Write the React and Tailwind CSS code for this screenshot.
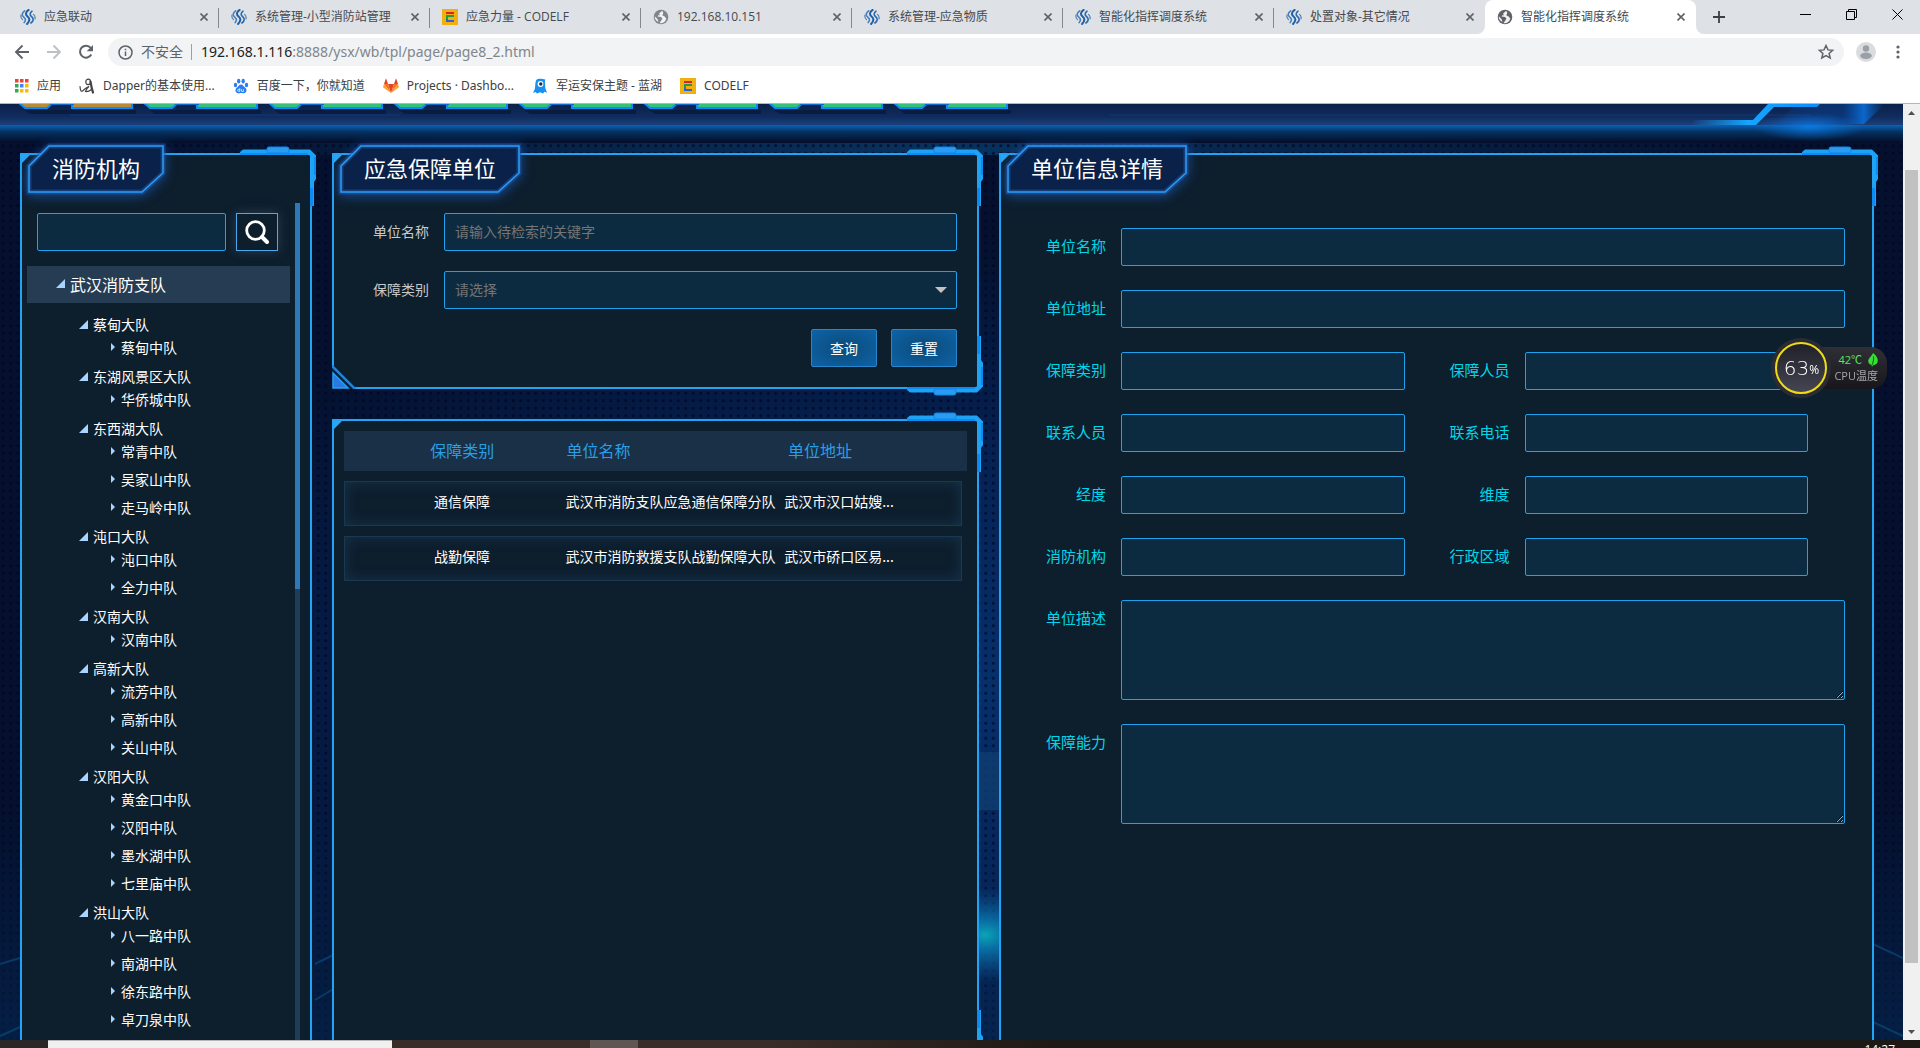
import React from "react";

const TREE = [
  ["蔡甸大队", ["蔡甸中队"]],
  ["东湖风景区大队", ["华侨城中队"]],
  ["东西湖大队", ["常青中队", "吴家山中队", "走马岭中队"]],
  ["沌口大队", ["沌口中队", "全力中队"]],
  ["汉南大队", ["汉南中队"]],
  ["高新大队", ["流芳中队", "高新中队", "关山中队"]],
  ["汉阳大队", ["黄金口中队", "汉阳中队", "墨水湖中队", "七里庙中队"]],
  ["洪山大队", ["八一路中队", "南湖中队", "徐东路中队", "卓刀泉中队"]],
];

const ROWS = [
  ["通信保障", "武汉市消防支队应急通信保障分队", "武汉市汉口姑嫂..."],
  ["战勤保障", "武汉市消防救援支队战勤保障大队", "武汉市硚口区易..."],
];

/* ---------- icons ---------- */

function SwirlIcon() {
  return (
    <svg className="size-4 shrink-0" viewBox="0 0 16 16" fill="none" strokeLinecap="round">
      <path d="M4.6 1.8C1.6 4 1.4 6.6 4 8.4c2 1.5 1.8 3.3.2 5.2" stroke="#4a7fb5" strokeWidth="1.6" />
      <path d="M8.6.9C5.2 3.3 5.2 5.8 7.8 7.7c2.3 1.8 2 4.3-.7 7.3" stroke="#1f5fa8" strokeWidth="2" />
      <path d="M12 2.2C9.6 4.2 9.6 6 11.6 7.7c2.4 2 2 4.2-.7 6.3" stroke="#2c68ad" strokeWidth="1.6" />
      <path d="M1 6c-.4 2 .2 3.5 1.5 4.6M15 10c.4-2-.2-3.5-1.5-4.6" stroke="#4a7fb5" strokeWidth="1.2" />
    </svg>
  );
}

function CodelfIcon() {
  return (
    <svg className="size-4 shrink-0" viewBox="0 0 16 16">
      <path fill="#f0b010" d="M0 0h16v16H0z" />
      <path fill="#d8232a" d="M4 3h8v2H4z" />
      <path fill="#1e9e3e" d="M4 6h8v2H6v2H4z" />
      <path fill="#2f62d9" d="M4 10h2v1h6v2H4z" />
    </svg>
  );
}

function GlobeIcon({ color }) {
  return (
    <svg className="size-4 shrink-0" viewBox="0 0 16 16">
      <circle cx="8" cy="8" r="7.3" fill={color} />
      <path
        fill="#fff"
        opacity=".9"
        d="M8.5 2.2 6 4.8l1 1.4H5.3L4.6 7.5 8 7.9l1.4 1.7-.8 1.5L6.5 14.3a6.5 6.5 0 0 0 6.8-4.8l-1.7-2-2.3-1.2 1-2.2L9.600 2.300zM1.700 7.200l2.800 2.900 1 2.900A6.300 6.300 0 0 1 1.700 7.200z"
      />
    </svg>
  );
}

function CloseIcon() {
  return (
    <svg className="size-2" viewBox="0 0 8 8" stroke="#5f6368" strokeWidth="1.6">
      <path d="M.5.5l7 7M7.5.5l-7 7" />
    </svg>
  );
}

function AppsIcon() {
  const colors = ["#ea4335", "#ea4335", "#ea4335", "#34a853", "#4285f4", "#fbbc05", "#34a853", "#fbbc05", "#fbbc05"];
  return (
    <svg className="size-[14px] shrink-0" viewBox="0 0 14 14">
      {colors.map((c, i) => (
        <rect key={i} x={(i % 3) * 5} y={Math.floor(i / 3) * 5} width="3.5" height="3.5" fill={c} />
      ))}
    </svg>
  );
}

function DapperIcon() {
  return (
    <svg className="size-4 shrink-0" viewBox="0 0 16 16" fill="none" stroke="#444" strokeLinecap="round">
      <path d="M11.500 4c0 1.700-1.200 2.700-2.500 2.700S6.800 5.700 6.800 4 8 1.200 9.300 1.200 11.500 2.300 11.500 4z" strokeWidth="1.200" />
      <path d="M11.500 3.500c.5 3 1 7 2.500 11" strokeWidth="2.200" />
      <path d="M1 8.500c.3 3.500 1 5.500 2.500 4.500 2-1.200 3.500-4 6.500-4.500-2 1.500-3 3-3.500 5 2 .3 4-.5 6-2" strokeWidth="1.200" />
    </svg>
  );
}

function BaiduIcon() {
  return (
    <svg className="size-4 shrink-0" viewBox="0 0 16 16" fill="#2d7df0">
      <ellipse cx="2.5" cy="7" rx="1.7" ry="2.2" />
      <ellipse cx="5.7" cy="3.2" rx="1.7" ry="2.4" />
      <ellipse cx="10.2" cy="3.2" rx="1.7" ry="2.4" />
      <ellipse cx="13.5" cy="7" rx="1.7" ry="2.2" />
      <path d="M8 6.5c2 0 2.7 2 4.3 3.3 2.3 2 1 5.4-1.3 5.4-1.3 0-2-.3-3-.3s-1.7.3-3 .3c-2.3 0-3.6-3.4-1.3-5.4C5.3 8.5 6 6.5 8 6.5z" />
      <path d="M6.8 10.3v3H5.6a.9.9 0 0 1 0-1.9h1.2M8.5 11.3v1.5c0 .5.3.7.7.7h1.2v-2.2" fill="none" stroke="#fff" strokeWidth=".8" />
    </svg>
  );
}

function GitlabIcon() {
  return (
    <svg className="size-4 shrink-0" viewBox="0 0 16 16">
      <path fill="#e24329" d="M8 15 11 6H5z" />
      <path fill="#fc6d26" d="M8 15 5 6H1z" />
      <path fill="#fc6d26" d="M8 15l3-9h4z" />
      <path fill="#fca326" d="M1 6 .1 8.8a.6.6 0 0 0 .2.7L8 15z" />
      <path fill="#fca326" d="m15 6 .9 2.8a.6.6 0 0 1-.2.7L8 15z" />
      <path fill="#e24329" d="M1 6h4L3.3 1c-.1-.3-.5-.3-.6 0zM15 6h-4l1.7-5c.1-.3.5-.3.6 0z" />
    </svg>
  );
}

function LanhuIcon() {
  return (
    <svg className="size-4 shrink-0" viewBox="0 0 16 16">
      <path fill="#1890f0" d="M4 2.500C5 1 6.500.8 8 .8s4 .2 5.500 1c-.5.8-.7 1.700-.5 3 .3 2 0 4 .5 6l1.500 4-2.500-1-1.500 1.700-3-1.200-3 1.200L3.500 14 1 15l1.800-4C3.500 8 3 5 4 2.500z" />
      <circle cx="8.5" cy="6" r="2.900" fill="#fff" />
      <circle cx="8.8" cy="6" r="1.700" fill="#103060" />
    </svg>
  );
}

/* ---------- browser chrome ---------- */

const TABS = [
  ["应急联动", <SwirlIcon />],
  ["系统管理-小型消防站管理", <SwirlIcon />],
  ["应急力量 - CODELF", <CodelfIcon />],
  ["192.168.10.151", <GlobeIcon color="#80868b" />],
  ["系统管理-应急物质", <SwirlIcon />],
  ["智能化指挥调度系统", <SwirlIcon />],
  ["处置对象-其它情况", <SwirlIcon />],
  ["智能化指挥调度系统", <GlobeIcon color="#5f6368" />],
];

const BOOKMARKS = [
  ["应用", <AppsIcon />],
  ["Dapper的基本使用...", <DapperIcon />],
  ["百度一下，你就知道", <BaiduIcon />],
  ["Projects · Dashbo...", <GitlabIcon />],
  ["军运安保主题 - 蓝湖", <LanhuIcon />],
  ["CODELF", <CodelfIcon />],
];

function TabStrip() {
  return (
    <div className="flex h-[34px] items-stretch bg-[#dee1e6] pl-2">
      {TABS.map(([title, icon], i) => {
        const active = i === TABS.length - 1;
        return (
          <div
            key={i}
            className={
              "relative flex w-[211px] items-center gap-2 pl-3 pr-[9px] text-xs text-[#45494d] " +
              (active ? "rounded-t-lg bg-white" : "")
            }
          >
            {icon}
            <span className="min-w-0 flex-1 truncate">{title}</span>
            <button aria-label="关闭标签页" className="flex size-3 items-center justify-center">
              <CloseIcon />
            </button>
            {i < TABS.length - 2 && <span className="absolute right-0 top-2 h-5 w-px bg-[#85898e]" />}
            {active && (
              <>
                <svg className="absolute -left-2 bottom-0 size-2" viewBox="0 0 8 8">
                  <path fill="#fff" d="M8 0v8H0a8 8 0 0 0 8-8z" />
                </svg>
                <svg className="absolute -right-2 bottom-0 size-2" viewBox="0 0 8 8">
                  <path fill="#fff" d="M0 0v8h8a8 8 0 0 1-8-8z" />
                </svg>
              </>
            )}
          </div>
        );
      })}
      <button aria-label="新标签页" className="ml-[15px] flex w-4 items-center justify-center">
        <svg className="size-3" viewBox="0 0 12 12" stroke="#3c4043" strokeWidth="1.8">
          <path d="M6 0v12M0 6h12" />
        </svg>
      </button>
      <div className="ml-auto flex h-7">
        <button aria-label="最小化" className="flex w-[46px] items-center justify-center">
          <svg className="size-[11px]" viewBox="0 0 11 11" stroke="#000">
            <path d="M0 5.5h11" />
          </svg>
        </button>
        <button aria-label="还原" className="flex w-[46px] items-center justify-center">
          <svg className="size-[11px]" viewBox="0 0 11 11" stroke="#000" fill="none">
            <path d="M.5 2.5h8v8h-8zM2.5 2.5v-2h8v8h-2" />
          </svg>
        </button>
        <button aria-label="关闭" className="flex w-[46px] items-center justify-center">
          <svg className="size-[11px]" viewBox="0 0 11 11" stroke="#000">
            <path d="M.5.5l10 10M10.5.5l-10 10" />
          </svg>
        </button>
      </div>
    </div>
  );
}

function Toolbar() {
  return (
    <div className="flex h-9 items-center bg-white pl-3 pr-3">
      <div className="flex w-24 gap-3">
        <button aria-label="后退">
          <svg className="size-5" viewBox="0 0 20 20" fill="none" stroke="#5f6368" strokeWidth="1.9">
            <path d="M17 10H4M10.5 3.5 4 10l6.5 6.5" />
          </svg>
        </button>
        <button aria-label="前进">
          <svg className="size-5" viewBox="0 0 20 20" fill="none" stroke="#bdc1c6" strokeWidth="1.9">
            <path d="M3 10h13M9.5 3.5 16 10l-6.5 6.5" />
          </svg>
        </button>
        <button aria-label="重新加载">
          <svg className="size-5" viewBox="0 0 20 20">
            <path d="M15.3 12.5a6 6 0 1 1-.6-6.6" fill="none" stroke="#5f6368" strokeWidth="2" />
            <path d="M17 3v6.3h-6.3z" fill="#5f6368" />
          </svg>
        </button>
      </div>
      <div className="flex h-7 flex-1 items-center rounded-full bg-[#f1f3f4] pl-[10px] pr-2 text-sm">
        <svg className="size-[15px]" viewBox="0 0 15 15" fill="none" stroke="#5f6368" strokeWidth="1.5">
          <circle cx="7.5" cy="7.5" r="6.5" />
          <path d="M7.5 6.5v4.5M7.5 3.8v1.5" />
        </svg>
        <span className="ml-2 text-[#5f6368]">不安全</span>
        <span className="ml-2 h-4 w-px bg-[#9aa0a6]" />
        <span className="ml-[9px] flex-1 font-['Noto_Sans'] text-[#80868b]">
          <span className="text-[#202124]">192.168.1.116</span>:8888/ysx/wb/tpl/page/page8_2.html
        </span>
        <button aria-label="加入书签">
          <svg className="size-5" viewBox="0 0 20 20" fill="none" stroke="#5f6368" strokeWidth="1.5">
            <path d="M10 3.5l2 4.4 4.6.4-3.5 3.1 1.1 4.6L10 13.6 5.8 16l1.1-4.6-3.5-3.1 4.6-.4z" />
          </svg>
        </button>
      </div>
      <button aria-label="用户" className="ml-3">
        <svg className="size-5" viewBox="0 0 20 20">
          <circle cx="10" cy="10" r="10" fill="#dadce0" />
          <circle cx="10" cy="6.5" r="3.2" fill="#9aa0a6" />
          <ellipse cx="10" cy="13.8" rx="5.8" ry="3.2" fill="#9aa0a6" />
        </svg>
      </button>
      <button aria-label="菜单" className="ml-3">
        <svg className="size-5" viewBox="0 0 20 20" fill="#5f6368">
          <circle cx="10" cy="5" r="1.6" />
          <circle cx="10" cy="10" r="1.6" />
          <circle cx="10" cy="15" r="1.6" />
        </svg>
      </button>
    </div>
  );
}

function BookmarkBar() {
  return (
    <nav className="flex h-[34px] items-center gap-[18px] border-b border-[#b6b4b6] bg-white pb-0.5 pl-[15px] font-['Noto_Sans','Noto_Sans_CJK_SC',sans-serif] text-xs text-[#3c4043]">
      {BOOKMARKS.map(([title, icon], i) => (
        <a key={i} href="#" className="flex items-center gap-2">
          {icon}
          {title}
        </a>
      ))}
    </nav>
  );
}

/* ---------- page decoration ---------- */

function Backdrop() {
  return (
    <svg className="absolute inset-0 h-full w-full" viewBox="0 0 1903 936" preserveAspectRatio="none">
      <defs>
        <radialGradient id="bgGlow" cx=".51" cy=".62" r=".48">
          <stop offset="0" stopColor="#06306c" />
          <stop offset=".5" stopColor="#052254" />
          <stop offset="1" stopColor="#04102e" />
        </radialGradient>
        <pattern id="dots" width="7.5" height="7.5" patternUnits="userSpaceOnUse">
          <rect x="2" y="3" width="2.5" height="2.5" fill="#01031c" opacity=".75" />
        </pattern>
        <linearGradient id="bottomTint" x1="0" y1="0" x2="0" y2="1">
          <stop offset="0" stopColor="#063a6e" stopOpacity="0" />
          <stop offset="1" stopColor="#063a6e" stopOpacity=".35" />
        </linearGradient>
        <linearGradient id="topShade" x1="0" y1="0" x2="0" y2="1">
          <stop offset="0" stopColor="#0a62b8" />
          <stop offset=".4" stopColor="#063262" />
          <stop offset="1" stopColor="#040f2a" />
        </linearGradient>
        <linearGradient id="topBand" x1="0" x2="1" y1="0" y2="0">
          <stop offset="0" stopColor="#0a4a80" stopOpacity="0" />
          <stop offset=".5" stopColor="#0a4a80" stopOpacity=".6" />
          <stop offset="1" stopColor="#0a4a80" stopOpacity="0" />
        </linearGradient>
        <radialGradient id="beam">
          <stop offset="0" stopColor="#0aa6b4" />
          <stop offset=".3" stopColor="#0a80b8" stopOpacity=".8" />
          <stop offset="1" stopColor="#0a60a8" stopOpacity="0" />
        </radialGradient>
        <radialGradient id="headerGlow">
          <stop offset="0" stopColor="#0a80ee" stopOpacity=".8" />
          <stop offset="1" stopColor="#0a70d8" stopOpacity="0" />
        </radialGradient>
        <linearGradient id="header" x1="0" y1="0" x2="0" y2="1">
          <stop offset="0" stopColor="#0a2148" />
          <stop offset=".6" stopColor="#102c5e" />
          <stop offset="1" stopColor="#1a407a" />
        </linearGradient>
        <linearGradient id="slash" x1="0" x2="1" y1="0" y2="0">
          <stop offset="0" stopColor="#16a5ff" stopOpacity="0" />
          <stop offset=".45" stopColor="#16a5ff" />
          <stop offset="1" stopColor="#0c8cf8" />
        </linearGradient>
        <linearGradient id="slash2" x1="0" x2="1" y1="0" y2="0">
          <stop offset="0" stopColor="#0a50b0" stopOpacity=".1" />
          <stop offset=".6" stopColor="#0a3a86" stopOpacity=".6" />
          <stop offset=".8" stopColor="#0a68cc" />
          <stop offset="1" stopColor="#0a50a0" stopOpacity="0" />
        </linearGradient>
      </defs>
      <path fill="url(#bgGlow)" d="M0 0h1903v936H0z" />
      <path fill="url(#topBand)" d="M100 39h1703v12H100z" />
      <path fill="url(#dots)" d="M0 30h1903v906H0z" />
      <path fill="#0f3c70" opacity=".85" d="M970 648h40v58h-40z" />
      <path fill="url(#bottomTint)" d="M0 700h1903v236H0z" />
      <ellipse cx="985" cy="831" rx="70" ry="48" fill="url(#beam)" />
      <path
        d="M0 932l20-9M315 896l20-12M315 860l20-10M1873 918l30 14M1873 840l30 14M0 860l20-6"
        stroke="#0c5a90"
        strokeWidth="2"
        opacity=".5"
      />
      <path fill="url(#topShade)" d="M0 21h1903v17H0z" />
      <path fill="url(#header)" d="M0 0h1903v21H0z" />
      <path d="M70 11h330M1110 11h700" stroke="#1d4580" opacity=".5" />
      <path fill="url(#slash2)" d="M1778 20l17-20h90l-21 20z" />
      <ellipse cx="1810" cy="23" rx="55" ry="14" fill="url(#headerGlow)" />
      <path fill="url(#slash)" d="M1695 16h58l15-16h52l-3 3h-43l-18 18h-66z" />
    </svg>
  );
}

function HeaderChip({ fill }) {
  return (
    <svg className="h-2 w-[115px] shrink-0 overflow-visible" viewBox="0 0 115 8">
      <path d="M4 6h112v4H10z" fill="#04102c" opacity=".5" />
      <path d="M-2-2 5 4h22l7-6M52-2v6h60v-6" fill={fill} stroke="#0a8cf5" strokeWidth="2" />
      <path d="M30 0h24" stroke="#0a6cd0" strokeWidth="2" />
    </svg>
  );
}

function CornerRail({ className }) {
  return (
    <svg className={"absolute h-[62px] w-20 " + className} viewBox="0 0 80 62">
      <path fill="#1ea2f6" d="M2 9V6l3-2.5h67l6 6V33l-2 3v24h-4V38l2-2V12l-3-3z" />
      <path fill="#0b8cf5" d="M2 7h68v2H2zM76 11h2v18h-2zM72 42h3v18h-3z" />
      <rect x="29" y="1" width="22" height="6" rx="2" fill="#2a9bf0" stroke="#0b86ee" />
    </svg>
  );
}

function Panel({ title, className, bottom, bottomLeft, children }) {
  return (
    <section className={"relative border-2 border-[#22a4f4] bg-[#0d1e2d] " + className}>
      <svg className="absolute left-0 top-0 size-2" viewBox="0 0 8 8">
        <path fill="#2aa6f5" d="M0 0h8L0 8z" />
      </svg>
      <CornerRail className="-right-2 -top-[9px]" />
      {bottom && <CornerRail className="-bottom-[9px] -right-2 -scale-y-100" />}
      {bottomLeft && (
        <svg className="absolute -bottom-0.5 -left-0.5 size-6" viewBox="0 0 24 24">
          <path fill="#0b1c33" d="M0 1v23h23z" />
          <path d="M0 1l23 23" stroke="#1486ea" strokeWidth="2.5" />
          <path fill="#2a78e0" stroke="#1ea2f6" strokeWidth="1.5" d="M1 8v15h15z" />
        </svg>
      )}
      {title && <PanelTitle>{title}</PanelTitle>}
      {children}
    </section>
  );
}

function PanelTitle({ children }) {
  const w = children.length * 22 + 48;
  const shape = `M21 1H${w - 1}V28L${w - 22} 47H1V21z`;
  return (
    <h2 className="absolute -top-2.5 left-1.5 flex h-12 items-center px-6 text-[22px] leading-none text-white">
      <svg
        className="absolute inset-0 h-full w-full overflow-visible drop-shadow-[0_2px_6px_#1f66d8a0]"
        viewBox={`0 0 ${w} 48`}
      >
        <path d={shape} fill="#0a2249" />
        <path d={shape} fill="none" stroke="#1c5cae" strokeWidth="5" opacity=".5" />
        <path d={shape} fill="none" stroke="#2e9cf5" strokeWidth="1.5" />
      </svg>
      <span className="relative -mt-1">{children}</span>
    </h2>
  );
}

/* ---------- panels ---------- */

const BOX = "rounded-xs border border-[#1fa2ee] bg-[#0d2b40] text-white outline-none ";

function OrgPanel() {
  return (
    <Panel title="消防机构" className="h-[1100px]">
      <div className="flex h-full gap-[5px] pl-[5px] pr-2.5 pt-12">
        <div className="min-w-0 flex-1 pt-2.5">
          <form className="flex gap-2.5 pl-2.5 pr-3">
            <input aria-label="搜索机构" className={BOX + "h-[38px] min-w-0 flex-1 px-2 text-sm"} />
            <button
              type="button"
              aria-label="搜索"
              className="flex h-[38px] w-[42px] items-center justify-center border border-[#4aa8ee] shadow-[0_0_10px_#2d3f50]"
            >
              <svg className="size-6" viewBox="0 0 24 24" fill="none" stroke="#fff" strokeLinecap="round">
                <circle cx="10.5" cy="10.5" r="8.8" strokeWidth="2.8" />
                <path d="M17 17l5 5" strokeWidth="4" />
              </svg>
            </button>
          </form>
          <div className="mt-[15px] flex h-[37px] items-center gap-[5px] bg-[#253c53] pb-0.5 pl-[29px] text-base text-white">
            <Expanded />
            武汉消防支队
          </div>
          <ul className="mt-3 text-sm text-white">
            {TREE.map(([group, teams]) => (
              <li key={group} className="mb-1.5">
                <div className="flex h-[18px] items-center gap-[5px] pl-[52px]">
                  <Expanded />
                  {group}
                </div>
                <ul>
                  {teams.map((team) => (
                    <li key={team} className="flex h-7 items-center gap-1.5 pl-[84px]">
                      <svg className="h-2 w-1" viewBox="0 0 4 8">
                        <path fill="#a9d4ff" d="M0 0l4 4-4 4z" />
                      </svg>
                      {team}
                    </li>
                  ))}
                </ul>
              </li>
            ))}
          </ul>
        </div>
        <div className="w-[5px] bg-[#1f3d58]">
          <div className="h-[386px] bg-[#2d78b8]" />
        </div>
      </div>
    </Panel>
  );
}

function Expanded() {
  return (
    <svg className="size-[9px]" viewBox="0 0 9 9">
      <path fill="#a9d4ff" d="M9 0v9H0z" />
    </svg>
  );
}

function ActionButton({ children }) {
  return (
    <button
      type="button"
      className="h-[38px] w-[66px] rounded-xs border border-[#2a86cc] bg-radial from-[#0c4a78] to-[#0d63a8] text-sm text-white"
    >
      {children}
    </button>
  );
}

function SearchPanel() {
  return (
    <Panel title="应急保障单位" bottom bottomLeft className="h-[236px]">
      <form className="flex flex-col gap-5 pl-[39px] pr-5 pt-[58px] text-sm">
        <div className="flex items-center">
          <label htmlFor="q-name" className="w-[71px] pb-0.5 text-[#c9c9c9]">
            单位名称
          </label>
          <input
            id="q-name"
            placeholder="请输入待检索的关键字"
            className={BOX + "h-[38px] min-w-0 flex-1 px-2.5 pb-0.5 placeholder:text-[#757575]"}
          />
        </div>
        <div className="flex items-center">
          <label htmlFor="q-type" className="w-[71px] pb-0.5 text-[#c9c9c9]">
            保障类别
          </label>
          <div className="relative flex-1">
            <select id="q-type" className={BOX + "h-[38px] w-full appearance-none px-2.5 pb-0.5 text-[#757575]!"}>
              <option>请选择</option>
            </select>
            <svg className="pointer-events-none absolute right-2.5 top-4 h-1.5 w-3" viewBox="0 0 12 6">
              <path fill="#c2c2c2" d="M0 0h12L6 6z" />
            </svg>
          </div>
        </div>
        <div className="flex justify-end gap-3.5">
          <ActionButton>查询</ActionButton>
          <ActionButton>重置</ActionButton>
        </div>
      </form>
    </Panel>
  );
}

function UnitTable() {
  const cols = "grid grid-cols-[10%_18%_42%_30%] items-center ";
  return (
    <Panel bottom className="h-[644px]">
      <table className="block px-2.5 pt-2.5">
        <thead className="block">
          <tr className={cols + "h-10 bg-[#1a3046] pb-0.5 text-left text-base text-[#2a9fe5]"}>
            <th />
            <th className="text-center font-normal">保障类别</th>
            <th className="pl-12 font-normal">单位名称</th>
            <th className="pl-2 font-normal">单位地址</th>
          </tr>
        </thead>
        <tbody className="block pr-[5px]">
          {ROWS.map(([type, name, addr]) => (
            <tr
              key={name}
              className={
                cols +
                "mt-2.5 h-[45px] border border-[#1b3850] pb-1.5 text-sm whitespace-nowrap text-white shadow-[inset_0_0_14px_#16344c]"
              }
            >
              <td />
              <td className="text-center">{type}</td>
              <td className="pl-12">{name}</td>
              <td className="pl-2">{addr}</td>
            </tr>
          ))}
        </tbody>
      </table>
    </Panel>
  );
}

function Field({ id, label, area }) {
  return (
    <div className="flex min-w-0 flex-1">
      <label htmlFor={id} className="w-[120px] shrink-0 pr-[15px] text-right text-[15px] leading-[35px] text-[#00d6e8]">
        {label}
      </label>
      {area ? (
        <textarea id={id} className={BOX + "h-[100px] min-w-0 flex-1 resize p-2 text-sm"} />
      ) : (
        <input id={id} className={BOX + "h-[38px] min-w-0 flex-1 px-2.5 text-sm"} />
      )}
    </div>
  );
}

function DetailPanel() {
  const pairs = [
    ["保障类别", "保障人员"],
    ["联系人员", "联系电话"],
    ["经度", "维度"],
    ["消防机构", "行政区域"],
  ];
  return (
    <Panel title="单位信息详情" className="h-[1100px]">
      <form className="flex flex-col gap-6 pt-[73px]">
        {["单位名称", "单位地址"].map((l) => (
          <div key={l} className="flex pr-[27px]">
            <Field id={"d-" + l} label={l} />
          </div>
        ))}
        {pairs.map(([a, b]) => (
          <div key={a} className="flex pr-16">
            <Field id={"d-" + a} label={a} />
            <Field id={"d-" + b} label={b} />
          </div>
        ))}
        {["单位描述", "保障能力"].map((l) => (
          <div key={l} className="flex pr-[27px]">
            <Field id={"d-" + l} label={l} area />
          </div>
        ))}
      </form>
    </Panel>
  );
}

function CpuWidget() {
  return (
    <div className="fixed right-[33px] top-[338px] flex items-center">
      <div className="relative z-10 flex size-[60px] items-center justify-center rounded-full bg-[#2b2b33] p-1">
        <div className="flex size-full items-center justify-center rounded-full border-2 border-[#f0dc14] bg-linear-to-b from-[#20212a] to-[#454652] text-white">
          <span className="font-['DejaVu_Sans'] text-[20px] leading-none font-light">63</span>
          <span className="mt-1 text-xs leading-none">%</span>
        </div>
      </div>
      <div className="-ml-4 flex h-[42px] flex-col justify-center rounded-r-2xl bg-linear-to-b from-[#2f2f36] to-[#17171b] pl-[19px] pr-[9px] text-[11px] leading-4">
        <span className="flex items-center justify-between pl-1 text-[#5ce65c]">
          42℃
          <svg className="h-3.5 w-2.5" viewBox="0 0 10 14">
            <path fill="#35e035" d="M5 0c3 2 5 5 4.800 8-.2 2.600-2 4-4.800 4.300L4 14l-.5-2C1 11.500 0 9.500.3 7.500.6 5 4 3 5 0z" />
            <path d="M5.5 3.5C6 7 5 9.5 4 12" stroke="#0d5a14" fill="none" />
          </svg>
        </span>
        <span className="text-[#a6a6ac]">CPU温度</span>
      </div>
    </div>
  );
}

function PageScrollbar() {
  return (
    <div className="flex w-[17px] flex-col items-center bg-[#f0f0f0]">
      <button aria-label="向上滚动" className="flex size-[17px] items-center justify-center">
        <svg className="h-1 w-[7px]" viewBox="0 0 7 4">
          <path fill="#505050" d="M0 4l3.500-4L7 4z" />
        </svg>
      </button>
      <div className="flex-[49]" />
      <div className="w-[13px] flex-[793] bg-[#c1c1c1]" />
      <div className="flex-[60]" />
      <button aria-label="向下滚动" className="flex size-[17px] items-center justify-center">
        <svg className="h-1 w-[7px]" viewBox="0 0 7 4">
          <path fill="#505050" d="M0 0l3.500 4L7 0z" />
        </svg>
      </button>
    </div>
  );
}

export default function App() {
  return (
    <div className="flex h-screen flex-col overflow-hidden font-['Open_Sans','Noto_Sans_CJK_SC',sans-serif]">
      <header>
        <TabStrip />
        <Toolbar />
        <BookmarkBar />
      </header>
      <div className="flex min-h-0 flex-1">
        <main className="relative min-w-0 flex-1 overflow-hidden bg-[#04102e] font-['Noto_Sans_CJK_SC',sans-serif]">
          <Backdrop />
          <div className="relative flex h-[49px] items-start gap-2.5 pl-5">
            {["#b88a3c", "#35c07c", "#35c07c", "#35c07c", "#35c07c", "#35c07c", "#35c07c", "#35c07c"].map((c, i) => (
              <HeaderChip key={i} fill={c} />
            ))}
          </div>
          <div className="relative grid grid-cols-[292px_647fr_875fr] items-start gap-5 pl-5 pr-[29px]">
            <OrgPanel />
            <div className="flex flex-col gap-[30px]">
              <SearchPanel />
              <UnitTable />
            </div>
            <DetailPanel />
          </div>
        </main>
        <PageScrollbar />
      </div>
      <footer className="relative flex h-2 items-start overflow-hidden bg-linear-to-r from-[#3a2d29] from-40% to-[#1d1916] to-55%">
        <div className="h-2 w-12 bg-[#2b2627]" />
        <div className="h-2 w-[344px] border-t border-[#b8b6b6] bg-[#f0f0f0]" />
        <div className="ml-[198px] h-2 w-12 bg-[#5f5553]" />
        <time className="ml-auto mr-[25px] mt-0.5 text-xs leading-4 text-white">14:27</time>
      </footer>
      <CpuWidget />
    </div>
  );
}
